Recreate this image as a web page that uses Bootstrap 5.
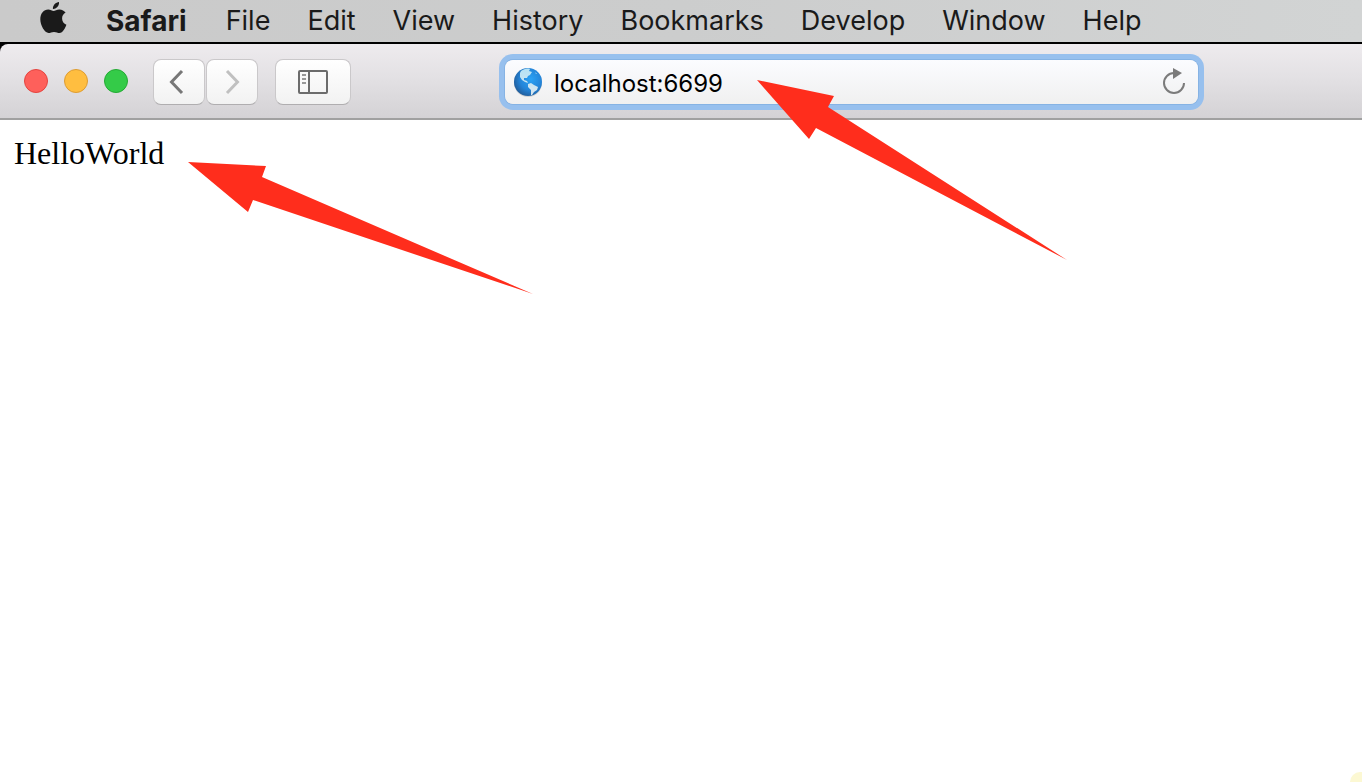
<!DOCTYPE html>
<html lang="en">
<head>
<meta charset="utf-8">
<meta name="viewport" content="width=device-width, initial-scale=1">
<title>localhost:6699</title>
<link href="https://cdn.jsdelivr.net/npm/bootstrap@5.3.0/dist/css/bootstrap.min.css" rel="stylesheet">
<style>
  body { font-family: Inter, "Liberation Sans", sans-serif; color: #000; background: #fff; }
  .menubar { height: 44px; padding-left: 40px; gap: 37px; background: linear-gradient(90deg, #cacaca, #cccdcd 50%, #d2d4d4); border-bottom: 2px solid #000; font-size: 27px; line-height: 42px; }
  .menubar a { color: #1a1a1a; text-decoration: none; white-space: nowrap; }
  .menubar .app-name { font-size: 28px; margin-right: 2px; }
  .apple { width: 27px; height: 34px; display: block; margin-top: 1px; margin-right: 2px; }
  .frame { background: #000; }
  .toolbar { height: 76px; padding: 2px 164px 0 24px; border-bottom: 2px solid #a0a0a0; border-top-left-radius: 8px; background: linear-gradient(#eeebee, #e3e1e4 45%, #d4d2d5); }
  .lights { gap: 16px; margin-right: 25px; margin-bottom: 2px; }
  .light { width: 24px; height: 24px; padding: 0; border-radius: 50%; border: 1px solid; }
  .red { background: #fe605b; border-color: #e4443f; }
  .amber { background: #ffbe40; border-color: #dd9c33; }
  .green { background: #34cb48; border-color: #24aa34; }
  .tool { height: 46px; width: 52px; padding: 0; border: 1px solid #cac8ca; border-bottom-color: #b0aeb0; border-radius: 8px; background: linear-gradient(#fff, #f2f2f2); }
  .tool + .tool { margin-left: 1px; }
  .tool svg { display: block; margin: auto; }
  .tool + .tool-wide { width: 76px; margin-left: 17px; }
  .address { height: 44px; margin-left: 154px; padding: 0 10px 0 8px; border-radius: 8px; background: linear-gradient(#fbfcff, #f0f0f0); box-shadow: 0 0 0 1px #86b3e4, 0 0 0 6px #97c0ee; }
  .address input { border: 0; outline: 0; background: transparent; font-size: 24px; line-height: 32px; padding: 3px 0 0; margin-left: 11px; min-width: 0; color: #000; }
  .reload { border: 0; padding: 0; background: transparent; }
  .reload svg, .globe { display: block; }
  .arrow { position: absolute; pointer-events: none; fill: #ff2d1c; z-index: 2; }
  .arrow-url { left: 252px; top: 20px; }
  .arrow-text { left: 188px; top: 42px; }
  .viewport { padding: 13px 14px; font-family: "Liberation Serif", serif; font-size: 32px; line-height: 40px; }
  .corner { position: fixed; right: 0; bottom: 0; width: 12px; height: 10px; background: #fcf8d3; border-top-left-radius: 10px; }
</style>
</head>
<body class="d-flex flex-column min-vh-100 overflow-hidden">
<nav class="menubar d-flex" aria-label="Menu bar">
  <a href="#" aria-label="Apple menu">
    <svg class="apple" viewBox="0 0 27 34" fill="#1a1a1a"><path d="M19 1c.2 2-.5 3.700-1.700 5.100C16 7.500 14.500 8 12.900 7.900c-.1-1.800.6-3.500 1.700-4.700C15.800 1.900 17.500 1.100 19 1z"/><path d="M13.600 9.900c1.400 0 3.200-1.500 5.800-1.500 2.700 0 4.900 1.300 6.200 3.200-2.500 1.500-3.600 3.700-3.500 6.100.1 2.900 1.800 5 4.300 6-1 3-3.700 8.300-6.900 8.300-2 0-2.900-1.100-5.500-1.100s-3.500 1.100-5.400 1.100c-3.800 0-8.300-7.500-8.300-13.700 0-6 3.500-9.800 7.900-9.800 2.300 0 4 1.400 5.400 1.400z"/></svg>
  </a>
  <a class="app-name fw-bold" href="#">Safari</a>
  <a href="#">File</a>
  <a href="#">Edit</a>
  <a href="#">View</a>
  <a href="#">History</a>
  <a href="#">Bookmarks</a>
  <a href="#">Develop</a>
  <a href="#">Window</a>
  <a href="#">Help</a>
</nav>
<header class="frame">
  <div class="toolbar d-flex align-items-center">
    <div class="lights d-flex">
      <button class="light red" aria-label="Close"></button>
      <button class="light amber" aria-label="Minimize"></button>
      <button class="light green" aria-label="Zoom"></button>
    </div>
    <button class="tool" aria-label="Back"><svg width="20" height="26" viewBox="0 0 20 26" fill="none" stroke="#777" stroke-width="3"><path d="M13 2 2.500 13 13 24"/></svg></button>
    <button class="tool" aria-label="Forward"><svg width="20" height="26" viewBox="0 0 20 26" fill="none" stroke="#c0c0c0" stroke-width="3"><path d="M5 2 15.500 13 5 24"/></svg></button>
    <button class="tool tool-wide" aria-label="Show sidebar"><svg width="30" height="24" viewBox="0 0 30 24" fill="none" stroke="#6c6c6c" stroke-width="2"><rect x="1" y="1" width="28" height="22" rx="1"/><path d="M11 1v22"/><path stroke="#999" d="M4 5h4M4 9h4M4 13h4"/></svg></button>
    <div class="address position-relative flex-grow-1 d-flex align-items-center">
      <svg class="globe flex-shrink-0" width="30" height="30" viewBox="0 0 30 30">
        <defs>
          <radialGradient id="sea" cx=".6" cy=".4" r=".65"><stop offset="0" stop-color="#2aa2f5"/><stop offset=".6" stop-color="#2484d8"/><stop offset="1" stop-color="#215c99"/></radialGradient>
          <linearGradient id="land" x2="0" y2="1"><stop offset="0" stop-color="#b5e2f5"/><stop offset="1" stop-color="#d9e6ef"/></linearGradient>
        </defs>
        <ellipse cx="15" cy="16" rx="14" ry="14" fill="#999" opacity=".35"/>
        <circle cx="15" cy="15" r="14" fill="url(#sea)"/>
        <path fill="url(#land)" d="M8 4c3-2 6-3 9-2l-1 2 3 1-2 3-2 1-1 2-3 0 0 2 3 1 1 2-3-1-3-2-2-3 0-4zM15 17l3-1 3 2 4 2-1 3-3 2-2 3-1 0 0-5-3-3zM22 5l2 2-1 0z"/>
      </svg>
      <input class="flex-grow-1" type="text" value="localhost:6699" aria-label="Address">
      <button class="reload" aria-label="Reload"><svg width="28" height="30" viewBox="0 0 28 30"><path d="M24 16a10 10 0 1 1-10-10" fill="none" stroke="#7b7b7b" stroke-width="2"/><path d="M13 1v11l9-6z" fill="#7b7b7b"/></svg></button>
      <svg class="arrow arrow-url" width="311" height="181" viewBox="0 0 311 181" aria-hidden="true"><path d="M0 0 77 16 71 27 310 180 59 48 52 59z"/></svg>
    </div>
  </div>
</header>
<main class="viewport position-relative flex-grow-1">
  HelloWorld
  <svg class="arrow arrow-text" width="346" height="133" viewBox="0 0 346 133" aria-hidden="true"><path d="M0 0 78 4 74 15 345 132 65 38 60 50z"/></svg>
</main>
<div class="corner"></div>
<script src="https://cdn.jsdelivr.net/npm/bootstrap@5.3.0/dist/js/bootstrap.bundle.min.js"></script>
</body>
</html>
